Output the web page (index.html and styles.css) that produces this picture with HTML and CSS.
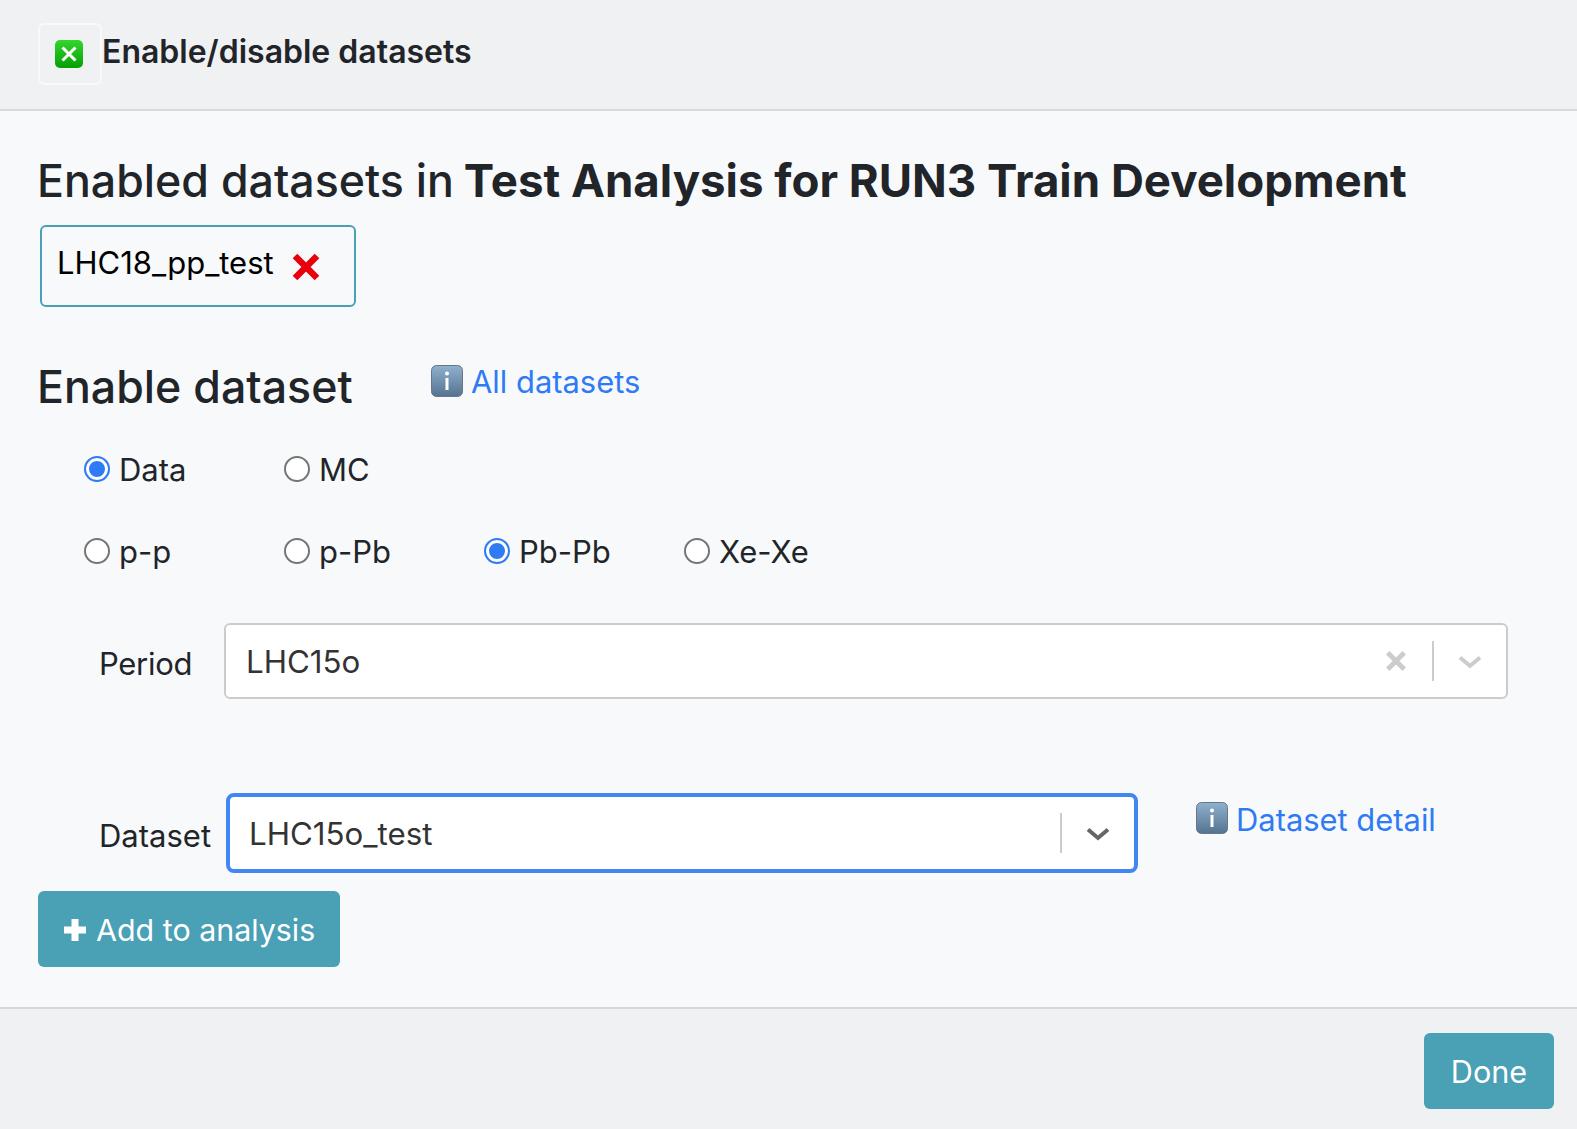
FILE: index.html
```html
<!DOCTYPE html>
<html lang="en">
<head>
    <meta charset="UTF-8">
    <meta name="viewport" content="width=device-width, initial-scale=1.0">
    <title>Enable/disable datasets</title>
    <link rel="stylesheet" href="styles.css">
</head>
<body>
    <div class="dialog">
        <header class="dialog-header">
            <span class="icon-button">
                <svg class="icon-green" viewBox="0 0 28 28">
                    <defs>
                        <linearGradient id="greenFill" x1="0" y1="0" x2="0" y2="1">
                            <stop offset="0" stop-color="#35d62e"/>
                            <stop offset="1" stop-color="#049f04"/>
                        </linearGradient>
                    </defs>
                    <rect width="28" height="28" rx="5" fill="url(#greenFill)"/>
                    <path d="M7.5 7.5L20.5 20.5M20.5 7.5L7.5 20.5" stroke="#fff" stroke-width="3"/>
                </svg>
            </span>
            <h5 class="dialog-title">Enable/disable datasets</h5>
        </header>

        <main class="dialog-body">
            <h4 class="section-title">Enabled datasets in <b>Test Analysis for RUN3 Train Development</b></h4>
            <div class="dataset-chip">
                <span class="chip-name">LHC18_pp_test</span>
                <svg class="icon-remove" viewBox="0 0 28 28">
                    <path d="M3 3L25 25M25 3L3 25" stroke="#e8000d" stroke-width="6.5"/>
                </svg>
            </div>

            <div class="enable-head">
                <h4 class="section-title enable-title">Enable dataset</h4>
                <a class="info-link" href="#">
                    <svg class="icon-info" viewBox="0 0 32 32">
                        <use href="#infoShape"/>
                    </svg>
                    All datasets
                </a>
            </div>

            <div class="radio-row">
                <label class="radio"><input type="radio" name="kind" checked>Data</label>
                <label class="radio"><input type="radio" name="kind">MC</label>
            </div>
            <div class="radio-row radio-row-second">
                <label class="radio"><input type="radio" name="system">p-p</label>
                <label class="radio"><input type="radio" name="system">p-Pb</label>
                <label class="radio"><input type="radio" name="system" checked>Pb-Pb</label>
                <label class="radio"><input type="radio" name="system">Xe-Xe</label>
            </div>

            <div class="field period-field">
                <label class="field-label">Period</label>
                <div class="select">
                    <span class="select-value">LHC15o</span>
                    <svg class="icon-clear" viewBox="0 0 20 20">
                        <path d="M2.5 2.5L17.5 17.5M17.5 2.5L2.5 17.5" stroke="#cccccc" stroke-width="4.4"/>
                    </svg>
                    <span class="select-sep"></span>
                    <svg class="icon-chevron" viewBox="0 0 24 14">
                        <path d="M2 2.5L12 11L22 2.5" fill="none" stroke="#cccccc" stroke-width="4"/>
                    </svg>
                </div>
            </div>

            <div class="field dataset-field">
                <label class="field-label">Dataset</label>
                <div class="select select-focus">
                    <span class="select-value">LHC15o_test</span>
                    <span class="select-sep"></span>
                    <svg class="icon-chevron" viewBox="0 0 24 14">
                        <path d="M2 2.5L12 11L22 2.5" fill="none" stroke="#666666" stroke-width="4"/>
                    </svg>
                </div>
                <a class="info-link detail-link" href="#">
                    <svg class="icon-info" viewBox="0 0 32 32">
                        <defs>
                            <linearGradient id="infoFill" x1="0" y1="0" x2="0" y2="1">
                                <stop offset="0" stop-color="#8fb0ce"/>
                                <stop offset="1" stop-color="#557391"/>
                            </linearGradient>
                            <g id="infoShape">
                                <rect x="0.5" y="0.5" width="31" height="31" rx="5" fill="url(#infoFill)" stroke="#66778a"/>
                                <circle cx="16" cy="8.5" r="2" fill="#fff"/>
                                <rect x="14.5" y="13" width="3" height="12" fill="#fff"/>
                            </g>
                        </defs>
                        <use href="#infoShape"/>
                    </svg>
                    Dataset detail
                </a>
            </div>

            <button class="btn btn-add" type="button">
                <svg class="icon-plus" viewBox="0 0 22 22">
                    <path d="M7.5 0H14.5V7.5H22V14.5H14.5V22H7.5V14.5H0V7.5H7.5Z" fill="#fff"/>
                </svg>
                Add to analysis
            </button>
        </main>

        <footer class="dialog-footer">
            <button class="btn btn-done" type="button">Done</button>
        </footer>
    </div>
</body>
</html>
```

FILE: styles.css
```css
* {
    box-sizing: border-box;
}

body {
    margin: 0;
    font-family: 'Inter', sans-serif;
    font-size: 31px;
    color: #212529;
    background-color: #f8f9fb;
}

.dialog {
    display: flex;
    flex-direction: column;
    height: 1129px;
    overflow: hidden;
}

.dialog-header {
    display: flex;
    align-items: center;
    height: 111px;
    padding: 0 0 1px 38px;
    background-color: #f0f1f3;
    border-bottom: 2px solid #d6d8da;
}

.icon-button {
    display: flex;
    align-items: center;
    justify-content: center;
    width: 64px;
    height: 62px;
    padding-right: 2px;
    border: 2px solid #f8f9fa;
    border-radius: 6px;
}

.icon-green {
    width: 28px;
    height: 28px;
}

.dialog-title {
    margin: 0 0 4px;
    font-size: 32px;
    font-weight: 600;
    line-height: 1.2;
}

.dialog-body {
    flex: 1;
    padding: 43px 38px 0;
}

.section-title {
    margin: 0 0 0 -1px;
    font-size: 44.7px;
    font-weight: 500;
    line-height: 54px;
}

.section-title b {
    margin-left: -2px;
    font-size: 45.6px;
    font-weight: 700;
}

.dataset-chip {
    display: flex;
    align-items: center;
    gap: 18px;
    width: 316px;
    height: 82px;
    margin: 17px 0 0 2px;
    padding: 0 0 0 15px;
    color: #000;
    border: 2px solid #4aa0b5;
    border-radius: 6px;
}

.chip-name {
    margin-bottom: 8px;
}

.icon-remove {
    width: 28px;
    height: 28px;
    margin-top: 2px;
}

.enable-head {
    display: flex;
    align-items: flex-start;
    margin-top: 53px;
}

.enable-title {
    width: 394px;
}

.info-link {
    display: flex;
    align-items: center;
    gap: 8px;
    color: #2f7bf6;
    font-size: 30.9px;
    text-decoration: none;
}

.enable-head .info-link {
    margin-top: 3px;
}

.icon-info {
    width: 32px;
    height: 32px;
    margin-bottom: 2px;
}

.radio-row {
    display: flex;
    margin: 37px 0 0 46px;
}

.radio-row-second {
    margin-top: 45px;
}

.radio {
    display: flex;
    align-items: center;
    gap: 9px;
    width: 200px;
    line-height: 37px;
}

.radio input {
    appearance: none;
    width: 26px;
    height: 26px;
    margin: 0 0 2px;
    background-color: #fff;
    border: 2px solid #767676;
    border-radius: 50%;
}

.radio input:checked {
    border-color: #2f7bf6;
    box-shadow: inset 0 0 0 3px #fff, inset 0 0 0 13px #2f7bf6;
}

.field {
    display: flex;
    align-items: center;
}

.period-field {
    margin: 53px 0 0 61px;
    height: 76px;
}

.period-field .field-label {
    width: 125px;
    margin-top: 4px;
    letter-spacing: -0.3px;
}

.period-field .select {
    width: 1284px;
}

.dataset-field {
    margin: 94px 0 0 61px;
    height: 80px;
}

.dataset-field .field-label {
    width: 127px;
    margin-top: 4px;
}

.select {
    display: flex;
    align-items: center;
    height: 76px;
    padding: 0 24px 0 20px;
    background-color: #fff;
    border: 2px solid #cccccc;
    border-radius: 6px;
}

.select-focus {
    width: 912px;
    height: 80px;
    padding-left: 19px;
    border: 4px solid #4285f4;
    border-radius: 8px;
}

.select-value {
    flex: 1;
    margin-top: 2px;
    color: #333333;
    font-size: 31.3px;
}

.icon-clear {
    width: 22px;
    height: 22px;
    margin-right: 25px;
}

.select-sep {
    width: 2px;
    height: 40px;
    margin-right: 24px;
    background-color: #cccccc;
}

.icon-chevron {
    width: 24px;
    height: 14px;
    margin-top: 2px;
}

.detail-link {
    margin: 0 0 28px 58px;
}

.btn {
    padding-top: 2px;
    color: #fff;
    font-family: inherit;
    font-size: 30.4px;
    background-color: #4aa0b5;
    border: none;
    border-radius: 6px;
}

.btn-add {
    display: flex;
    align-items: center;
    gap: 10px;
    width: 302px;
    height: 76px;
    margin-top: 18px;
    padding-left: 26px;
}

.icon-plus {
    width: 22px;
    height: 22px;
}

.dialog-footer {
    display: flex;
    justify-content: flex-end;
    align-items: flex-start;
    height: 122px;
    padding: 24px 23px 0 0;
    background-color: #f0f1f3;
    border-top: 2px solid #d6d8da;
}

.btn-done {
    width: 130px;
    height: 76px;
    font-size: 30.6px;
}
```
